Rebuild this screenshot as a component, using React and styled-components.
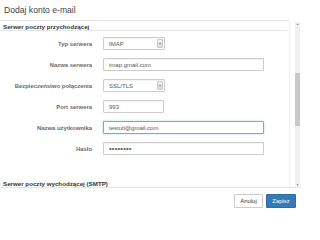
import React from "react";
import styled, { createGlobalStyle } from "styled-components";

const GlobalStyle = createGlobalStyle`
  html, body { margin: 0; padding: 0; background: #fff; }
  body { font-family: "Liberation Sans", Arial, sans-serif; }
`;

const Modal = styled.div`
  width: 300px;
  height: 211px;
  display: flex;
  flex-direction: column;
  background: #fff;
  color: #333;
  overflow: hidden;
`;

const Header = styled.div`
  height: 20px;
  display: flex;
  align-items: center;
  padding-left: 4px;
  box-sizing: border-box;
`;

const Title = styled.h4`
  margin: 0;
  font-size: 8.6px;
  font-weight: normal;
  color: #444;
`;

const Body = styled.div`
  height: 167px;
  display: flex;
  gap: 5px;
`;

const Content = styled.div`
  width: 290px;
  box-sizing: border-box;
  border-top: 1px solid #e5e5e5;
  border-right: 1px solid #f0f0f0;
  padding-right: 2px;
  overflow: hidden;
`;

const Legend = styled.div`
  font-size: 6.2px;
  font-weight: bold;
  color: #333;
  padding: 2px 0 0 3px;
  height: 10px;
  box-sizing: border-box;
  border-bottom: 1px solid #e5e5e5;
  margin-top: ${(p) => p.$top || 0}px;
`;

const Form = styled.div`
  display: grid;
  grid-template-columns: 92px 1fr;
  column-gap: 11px;
  row-gap: 8px;
  margin-top: 6px;
  align-items: center;
`;

const Label = styled.label`
  text-align: right;
  font-size: 5.9px;
  font-weight: bold;
  color: #6a6a6a;
`;

const Input = styled.div`
  width: ${(p) => p.$w}px;
  height: 13px;
  box-sizing: border-box;
  border: 1px solid ${(p) => (p.$focus ? "#66afe9" : "#ccc")};
  box-shadow: ${(p) =>
    p.$focus ? "0 0 2px rgba(102,175,233,0.6)" : "inset 0 1px 1px rgba(0,0,0,0.05)"};
  border-radius: 1px;
  display: flex;
  align-items: center;
  padding-left: 5px;
  font-size: ${(p) => (p.$dots ? "7.5px" : "6px")};
  color: #555;
  background: #fff;
  letter-spacing: ${(p) => (p.$dots ? "0.2px" : "0")};
`;

const Select = styled(Input)`
  justify-content: space-between;
  padding-right: 1px;
`;

const Caret = styled.span`
  width: 6px;
  height: 9px;
  box-sizing: border-box;
  border: 1px solid #c8c8c8;
  border-radius: 1px;
  background: linear-gradient(#f4f4f4, #dcdcdc);
  display: flex;
  align-items: center;
  justify-content: center;
  font-size: 4px;
  color: #888;
`;

const Scrollbar = styled.div`
  width: 5px;
  margin-top: 2px;
  background: #f1f1f1;
  display: flex;
  flex-direction: column;
  align-items: center;
  justify-content: space-between;
  position: relative;
`;

const Arrow = styled.span`
  font-size: 3px;
  color: #777;
  line-height: 4px;
`;

const Thumb = styled.div`
  position: absolute;
  left: 0;
  top: 51px;
  width: 5px;
  height: 53px;
  background: #c9c9c9;
`;

const Footer = styled.div`
  flex: 1;
  border-top: 1px solid #e5e5e5;
  display: flex;
  justify-content: flex-end;
  align-items: center;
  gap: 3px;
  padding: 2px 4px 0 0;
`;

const Button = styled.button`
  height: 14px;
  width: ${(p) => p.$w}px;
  padding: 0;
  font-family: inherit;
  font-size: 5.9px;
  border-radius: 1px;
  border: 1px solid ${(p) => (p.$primary ? "#2e6da4" : "#ccc")};
  background: ${(p) => (p.$primary ? "#337ab7" : "#fff")};
  color: ${(p) => (p.$primary ? "#fff" : "#333")};
`;

const fields = [
  { label: "Typ serwera", value: "IMAP", w: 62, select: true },
  { label: "Nazwa serwera", value: "imap.gmail.com", w: 161 },
  { label: "Bezpieczeństwo połączenia", value: "SSL/TLS", w: 62, select: true },
  { label: "Port serwera", value: "993", w: 61 },
  { label: "Nazwa użytkownika", value: "testuti@gmail.com", w: 161, focus: true },
  { label: "Hasło", value: "••••••••", w: 161, dots: true },
];

export default function App() {
  return (
    <Modal>
      <GlobalStyle />
      <Header>
        <Title>Dodaj konto e-mail</Title>
      </Header>
      <Body>
        <Content>
          <Legend>Serwer poczty przychodzącej</Legend>
          <Form>
            {fields.map((f) => (
              <React.Fragment key={f.label}>
                <Label>{f.label}</Label>
                {f.select ? (
                  <Select $w={f.w}>
                    {f.value}
                    <Caret>▼</Caret>
                  </Select>
                ) : (
                  <Input $w={f.w} $focus={f.focus} $dots={f.dots}>
                    {f.value}
                  </Input>
                )}
              </React.Fragment>
            ))}
          </Form>
          <Legend $top={23}>Serwer poczty wychodzącej (SMTP)</Legend>
        </Content>
        <Scrollbar>
          <Arrow>▲</Arrow>
          <Thumb />
          <Arrow>▼</Arrow>
        </Scrollbar>
      </Body>
      <Footer>
        <Button $w={29}>Anuluj</Button>
        <Button $w={30} $primary>
          Zapisz
        </Button>
      </Footer>
    </Modal>
  );
}
